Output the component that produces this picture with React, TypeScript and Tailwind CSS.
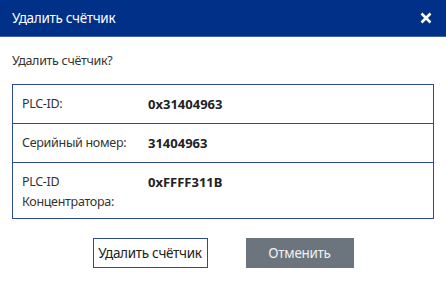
const rows = [
  { label: 'PLC-ID:', value: '0x31404963', h: 'h-[38px]' },
  { label: 'Серийный номер:', value: '31404963', h: 'h-[39px]' },
  { label: 'PLC-ID Концентратора:', value: '0xFFFF311B', h: 'h-[56px]' },
]

export default function App() {
  return (
    <div className="h-[286px] w-[446px] bg-white font-['Noto_Sans',sans-serif] text-[12.5px] tracking-[-0.3px] text-[#333]">
      <div className="flex h-[37px] items-center justify-between border-b border-[#3d63b0] bg-[#003087] pl-3 pr-[14px] text-[13.5px] text-white">
        <span>Удалить счётчик</span>
        <svg width="12" height="12" viewBox="0 0 12 12">
          <path d="M1.5 1.5 L10.5 10.5 M10.5 1.5 L1.5 10.5" stroke="white" strokeWidth="2.6" />
        </svg>
      </div>
      <div className="px-3 pt-[14px]">
        <p className="leading-5">Удалить счётчик?</p>
        <div className="mt-[13px] border border-[#2b4a9a]">
          {rows.map((row, i) => (
            <div
              key={i}
              className={`flex ${row.h} ${i > 0 ? 'border-t border-[#2b4a9a]' : ''} ${i === 2 ? 'items-start pt-[9px]' : 'items-center'} pl-[9px]`}
            >
              <div className="w-[126px] leading-5">{row.label}</div>
              <div className="text-[13px] font-bold leading-5 tracking-normal text-[#222]">{row.value}</div>
            </div>
          ))}
        </div>
        <div className="mt-[19px] flex justify-center gap-[38px]">
          <button className="h-[30px] w-[115px] border border-[#2b4a9a] bg-white text-[13.5px] text-[#222]">
            Удалить счётчик
          </button>
          <button className="h-[30px] w-[108px] bg-[#6c757d] text-[13.5px] text-[#f0f0f0]">
            Отменить
          </button>
        </div>
      </div>
    </div>
  )
}
